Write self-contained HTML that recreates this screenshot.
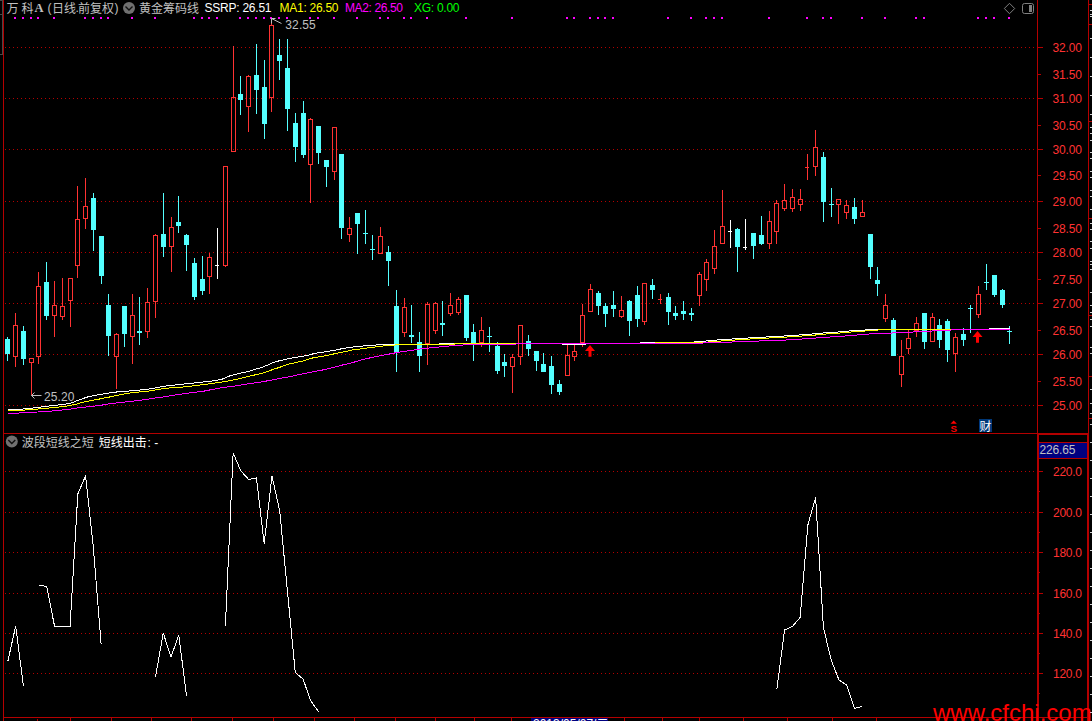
<!DOCTYPE html><html><head><meta charset="utf-8"><title>chart</title><style>html,body{margin:0;padding:0;background:#000;overflow:hidden}svg{display:block}text{font-family:"Liberation Sans","Noto Sans CJK SC",sans-serif;font-size:12px}.cj{font-family:"Liberation Sans","Noto Sans CJK SC",sans-serif}</style></head><body>
<svg width="1092" height="721" viewBox="0 0 1092 721">
<rect width="1092" height="721" fill="#000"/>
<g shape-rendering="crispEdges">
<line x1="5" x2="1036" y1="47.5" y2="47.5" stroke="#b40000" stroke-width="1" stroke-dasharray="1 3"/>
<line x1="5" x2="1036" y1="98.5" y2="98.5" stroke="#b40000" stroke-width="1" stroke-dasharray="1 3"/>
<line x1="5" x2="1036" y1="149.5" y2="149.5" stroke="#b40000" stroke-width="1" stroke-dasharray="1 3"/>
<line x1="5" x2="1036" y1="201.5" y2="201.5" stroke="#b40000" stroke-width="1" stroke-dasharray="1 3"/>
<line x1="5" x2="1036" y1="252.5" y2="252.5" stroke="#b40000" stroke-width="1" stroke-dasharray="1 3"/>
<line x1="5" x2="1036" y1="303.5" y2="303.5" stroke="#b40000" stroke-width="1" stroke-dasharray="1 3"/>
<line x1="5" x2="1036" y1="354.5" y2="354.5" stroke="#b40000" stroke-width="1" stroke-dasharray="1 3"/>
<line x1="5" x2="1036" y1="405.5" y2="405.5" stroke="#b40000" stroke-width="1" stroke-dasharray="1 3"/>
<line x1="5" x2="1036" y1="471.5" y2="471.5" stroke="#b40000" stroke-width="1" stroke-dasharray="1 3"/>
<line x1="5" x2="1036" y1="512.5" y2="512.5" stroke="#b40000" stroke-width="1" stroke-dasharray="1 3"/>
<line x1="5" x2="1036" y1="552.5" y2="552.5" stroke="#b40000" stroke-width="1" stroke-dasharray="1 3"/>
<line x1="5" x2="1036" y1="593.5" y2="593.5" stroke="#b40000" stroke-width="1" stroke-dasharray="1 3"/>
<line x1="5" x2="1036" y1="633.5" y2="633.5" stroke="#b40000" stroke-width="1" stroke-dasharray="1 3"/>
<line x1="5" x2="1036" y1="673.5" y2="673.5" stroke="#b40000" stroke-width="1" stroke-dasharray="1 3"/>
<rect x="3" y="0" width="1" height="721" fill="#b40000"/>
<rect x="2" y="0" width="1" height="55" fill="#484848"/>
<rect x="0" y="14" width="3" height="1" fill="#484848"/>
<rect x="0" y="0" width="3" height="1" fill="#484848"/>
<rect x="0" y="54" width="3" height="1" fill="#484848"/>
<rect x="1037" y="0" width="1" height="433" fill="#b40000"/>
<rect x="1088" y="0" width="1" height="433" fill="#b40000"/>
<rect x="1088" y="4" width="4" height="1" fill="#b40000"/>
<rect x="1088" y="24" width="4" height="1" fill="#b40000"/>
<rect x="1088" y="121" width="4" height="1" fill="#b40000"/>
<rect x="1088" y="218" width="4" height="1" fill="#b40000"/>
<rect x="1088" y="315" width="4" height="1" fill="#b40000"/>
<rect x="1088" y="376" width="4" height="1" fill="#b40000"/>
<rect x="1088" y="418" width="4" height="1" fill="#b40000"/>
<rect x="3" y="433" width="1035" height="1" fill="#b40000"/>
<rect x="1037" y="433" width="2" height="288" fill="#b40000"/>
<rect x="1087" y="433" width="2" height="288" fill="#b40000"/>
<rect x="1037" y="433" width="52" height="2" fill="#b40000"/>
<rect x="1039" y="442" width="48" height="1" fill="#b40000"/>
<rect x="1039" y="458" width="48" height="1" fill="#b40000"/>
<rect x="1039" y="443" width="48" height="15" fill="#000080"/>
<rect x="3" y="717" width="1086" height="1" fill="#b40000"/>
<rect x="70" y="717" width="1" height="4" fill="#b40000"/>
<rect x="111" y="717" width="1" height="4" fill="#b40000"/>
<rect x="151" y="717" width="1" height="4" fill="#b40000"/>
<rect x="191" y="717" width="1" height="4" fill="#b40000"/>
<rect x="232" y="717" width="1" height="4" fill="#b40000"/>
<rect x="273" y="717" width="1" height="4" fill="#b40000"/>
<rect x="314" y="717" width="1" height="4" fill="#b40000"/>
<rect x="354" y="717" width="1" height="4" fill="#b40000"/>
<rect x="395" y="717" width="1" height="4" fill="#b40000"/>
<rect x="435" y="717" width="1" height="4" fill="#b40000"/>
<rect x="474" y="717" width="1" height="4" fill="#b40000"/>
<rect x="511" y="717" width="1" height="4" fill="#b40000"/>
<rect x="624" y="717" width="1" height="4" fill="#b40000"/>
<rect x="662" y="717" width="1" height="4" fill="#b40000"/>
<rect x="699" y="717" width="1" height="4" fill="#b40000"/>
<rect x="743" y="717" width="1" height="4" fill="#b40000"/>
<rect x="787" y="717" width="1" height="4" fill="#b40000"/>
<rect x="832" y="717" width="1" height="4" fill="#b40000"/>
<rect x="876" y="717" width="1" height="4" fill="#b40000"/>
<rect x="37" y="719" width="1" height="2" fill="#b40000"/>
<rect x="1038" y="47" width="5" height="1" fill="#b40000"/>
<rect x="1038" y="74" width="3" height="1" fill="#b40000"/>
<rect x="1038" y="98" width="5" height="1" fill="#b40000"/>
<rect x="1038" y="125" width="3" height="1" fill="#b40000"/>
<rect x="1038" y="149" width="5" height="1" fill="#b40000"/>
<rect x="1038" y="175" width="3" height="1" fill="#b40000"/>
<rect x="1038" y="201" width="5" height="1" fill="#b40000"/>
<rect x="1038" y="228" width="3" height="1" fill="#b40000"/>
<rect x="1038" y="252" width="5" height="1" fill="#b40000"/>
<rect x="1038" y="279" width="3" height="1" fill="#b40000"/>
<rect x="1038" y="303" width="5" height="1" fill="#b40000"/>
<rect x="1038" y="330" width="3" height="1" fill="#b40000"/>
<rect x="1038" y="354" width="5" height="1" fill="#b40000"/>
<rect x="1038" y="381" width="3" height="1" fill="#b40000"/>
<rect x="1038" y="405" width="5" height="1" fill="#b40000"/>
<rect x="1039" y="471" width="4" height="1" fill="#b40000"/>
<rect x="1039" y="491" width="1" height="1" fill="#b40000"/>
<rect x="1039" y="512" width="4" height="1" fill="#b40000"/>
<rect x="1039" y="532" width="1" height="1" fill="#b40000"/>
<rect x="1039" y="552" width="4" height="1" fill="#b40000"/>
<rect x="1039" y="572" width="1" height="1" fill="#b40000"/>
<rect x="1039" y="593" width="4" height="1" fill="#b40000"/>
<rect x="1039" y="613" width="1" height="1" fill="#b40000"/>
<rect x="1039" y="633" width="4" height="1" fill="#b40000"/>
<rect x="1039" y="653" width="1" height="1" fill="#b40000"/>
<rect x="1039" y="673" width="4" height="1" fill="#b40000"/>
<rect x="1039" y="693" width="1" height="1" fill="#b40000"/>
<rect x="1090" y="10" width="2" height="1" fill="#d0d0d0"/>
<rect x="1090" y="14" width="2" height="1" fill="#d0d0d0"/>
<rect x="1090" y="16" width="2" height="1" fill="#d0d0d0"/>
<rect x="1090" y="38" width="2" height="1" fill="#d0d0d0"/>
<rect x="1090" y="57" width="2" height="1" fill="#d0d0d0"/>
<rect x="1090" y="76" width="2" height="1" fill="#d0d0d0"/>
<rect x="1090" y="95" width="2" height="1" fill="#d0d0d0"/>
<rect x="1090" y="114" width="2" height="1" fill="#d0d0d0"/>
<rect x="1090" y="127" width="2" height="1" fill="#d0d0d0"/>
<rect x="1090" y="133" width="2" height="1" fill="#d0d0d0"/>
<rect x="1090" y="140" width="2" height="1" fill="#d0d0d0"/>
<rect x="1090" y="152" width="2" height="1" fill="#d0d0d0"/>
<rect x="1090" y="158" width="2" height="1" fill="#d0d0d0"/>
<rect x="1090" y="171" width="2" height="1" fill="#d0d0d0"/>
<rect x="1090" y="177" width="2" height="1" fill="#d0d0d0"/>
<rect x="1090" y="190" width="2" height="1" fill="#d0d0d0"/>
<rect x="1090" y="196" width="2" height="1" fill="#d0d0d0"/>
<rect x="1090" y="209" width="2" height="1" fill="#d0d0d0"/>
<rect x="1090" y="223" width="2" height="1" fill="#d0d0d0"/>
<rect x="1090" y="229" width="2" height="1" fill="#d0d0d0"/>
<rect x="1090" y="241" width="2" height="1" fill="#d0d0d0"/>
<rect x="1090" y="248" width="2" height="1" fill="#d0d0d0"/>
<rect x="1090" y="261" width="2" height="1" fill="#d0d0d0"/>
<rect x="1090" y="264" width="2" height="1" fill="#d0d0d0"/>
<rect x="1090" y="269" width="2" height="1" fill="#d0d0d0"/>
<rect x="1090" y="292" width="2" height="1" fill="#d0d0d0"/>
<rect x="1090" y="305" width="2" height="1" fill="#d0d0d0"/>
<rect x="1090" y="312" width="2" height="1" fill="#d0d0d0"/>
<rect x="1090" y="319" width="2" height="1" fill="#d0d0d0"/>
<rect x="1090" y="326" width="2" height="1" fill="#d0d0d0"/>
<rect x="1090" y="347" width="2" height="1" fill="#d0d0d0"/>
<rect x="1090" y="353" width="2" height="1" fill="#d0d0d0"/>
<rect x="1090" y="389" width="2" height="1" fill="#d0d0d0"/>
<rect x="1090" y="403" width="2" height="1" fill="#d0d0d0"/>
<rect x="1090" y="413" width="2" height="1" fill="#d0d0d0"/>
<rect x="1090" y="424" width="2" height="1" fill="#d0d0d0"/>
<rect x="1090" y="442" width="2" height="1" fill="#d0d0d0"/>
<rect x="1090" y="460" width="2" height="1" fill="#d0d0d0"/>
<rect x="1090" y="478" width="2" height="1" fill="#d0d0d0"/>
<rect x="1090" y="496" width="2" height="1" fill="#d0d0d0"/>
<rect x="1090" y="514" width="2" height="1" fill="#d0d0d0"/>
<rect x="1090" y="532" width="2" height="1" fill="#d0d0d0"/>
<rect x="1090" y="550" width="2" height="1" fill="#d0d0d0"/>
<rect x="1090" y="568" width="2" height="1" fill="#d0d0d0"/>
<rect x="1090" y="586" width="2" height="1" fill="#d0d0d0"/>
<rect x="1090" y="604" width="2" height="1" fill="#d0d0d0"/>
<rect x="1090" y="622" width="2" height="1" fill="#d0d0d0"/>
<rect x="1090" y="640" width="2" height="1" fill="#d0d0d0"/>
<rect x="1090" y="658" width="2" height="1" fill="#d0d0d0"/>
<rect x="1090" y="676" width="2" height="1" fill="#d0d0d0"/>
<rect x="1090" y="694" width="2" height="1" fill="#d0d0d0"/>
<rect x="1090" y="712" width="2" height="1" fill="#d0d0d0"/>
<rect x="14" y="17" width="2" height="2" fill="#ff00ff"/>
<rect x="22" y="17" width="2" height="2" fill="#ff00ff"/>
<rect x="30" y="17" width="2" height="2" fill="#ff00ff"/>
<rect x="37" y="17" width="2" height="2" fill="#ff00ff"/>
<rect x="53" y="17" width="2" height="2" fill="#ff00ff"/>
<rect x="84" y="17" width="2" height="2" fill="#ff00ff"/>
<rect x="92" y="17" width="2" height="2" fill="#ff00ff"/>
<rect x="100" y="17" width="2" height="2" fill="#ff00ff"/>
<rect x="107" y="17" width="2" height="2" fill="#ff00ff"/>
<rect x="131" y="17" width="2" height="2" fill="#ff00ff"/>
<rect x="154" y="17" width="2" height="2" fill="#ff00ff"/>
<rect x="193" y="17" width="2" height="2" fill="#ff00ff"/>
<rect x="201" y="17" width="2" height="2" fill="#ff00ff"/>
<rect x="208" y="17" width="2" height="2" fill="#ff00ff"/>
<rect x="216" y="17" width="2" height="2" fill="#ff00ff"/>
<rect x="239" y="17" width="2" height="2" fill="#ff00ff"/>
<rect x="247" y="17" width="2" height="2" fill="#ff00ff"/>
<rect x="255" y="17" width="2" height="2" fill="#ff00ff"/>
<rect x="263" y="17" width="2" height="2" fill="#ff00ff"/>
<rect x="270" y="17" width="2" height="2" fill="#ff00ff"/>
<rect x="278" y="17" width="2" height="2" fill="#ff00ff"/>
<rect x="286" y="17" width="2" height="2" fill="#ff00ff"/>
<rect x="309" y="17" width="2" height="2" fill="#ff00ff"/>
<rect x="317" y="17" width="2" height="2" fill="#ff00ff"/>
<rect x="333" y="17" width="2" height="2" fill="#ff00ff"/>
<rect x="356" y="17" width="2" height="2" fill="#ff00ff"/>
<rect x="379" y="17" width="2" height="2" fill="#ff00ff"/>
<rect x="387" y="17" width="2" height="2" fill="#ff00ff"/>
<rect x="403" y="17" width="2" height="2" fill="#ff00ff"/>
<rect x="410" y="17" width="2" height="2" fill="#ff00ff"/>
<rect x="426" y="17" width="2" height="2" fill="#ff00ff"/>
<rect x="465" y="17" width="2" height="2" fill="#ff00ff"/>
<rect x="511" y="17" width="2" height="2" fill="#ff00ff"/>
<rect x="566" y="17" width="2" height="2" fill="#ff00ff"/>
<rect x="573" y="17" width="2" height="2" fill="#ff00ff"/>
<rect x="589" y="17" width="2" height="2" fill="#ff00ff"/>
<rect x="597" y="17" width="2" height="2" fill="#ff00ff"/>
<rect x="604" y="17" width="2" height="2" fill="#ff00ff"/>
<rect x="612" y="17" width="2" height="2" fill="#ff00ff"/>
<rect x="667" y="17" width="2" height="2" fill="#ff00ff"/>
<rect x="690" y="17" width="2" height="2" fill="#ff00ff"/>
<rect x="705" y="17" width="2" height="2" fill="#ff00ff"/>
<rect x="713" y="17" width="2" height="2" fill="#ff00ff"/>
<rect x="721" y="17" width="2" height="2" fill="#ff00ff"/>
<rect x="768" y="17" width="2" height="2" fill="#ff00ff"/>
<rect x="806" y="17" width="2" height="2" fill="#ff00ff"/>
<rect x="822" y="17" width="2" height="2" fill="#ff00ff"/>
<rect x="830" y="17" width="2" height="2" fill="#ff00ff"/>
<rect x="861" y="17" width="2" height="2" fill="#ff00ff"/>
<rect x="884" y="17" width="2" height="2" fill="#ff00ff"/>
<rect x="915" y="17" width="2" height="2" fill="#ff00ff"/>
<rect x="923" y="17" width="2" height="2" fill="#ff00ff"/>
<rect x="977" y="17" width="2" height="2" fill="#ff00ff"/>
<rect x="985" y="17" width="2" height="2" fill="#ff00ff"/>
<rect x="993" y="17" width="2" height="2" fill="#ff00ff"/>
<rect x="1008" y="17" width="2" height="2" fill="#ff00ff"/>
<rect x="531" y="718" width="77" height="3" fill="#000080"/>
</g>
<g shape-rendering="crispEdges">
<rect x="7" y="337" width="1" height="24" fill="#54ffff"/>
<rect x="5" y="339" width="5" height="15" fill="#54ffff"/>
<rect x="15" y="313" width="1" height="12" fill="#ff3232"/>
<rect x="15" y="357" width="1" height="10" fill="#ff3232"/>
<path d="M13,325h5v32h-5z M14,326v30h3v-30z" fill="#ff3232" fill-rule="evenodd"/>
<rect x="23" y="326" width="1" height="39" fill="#54ffff"/>
<rect x="21" y="331" width="5" height="28" fill="#54ffff"/>
<rect x="31" y="363" width="1" height="32" fill="#ff3232"/>
<path d="M29,358h5v5h-5z M30,359v3h3v-3z" fill="#ff3232" fill-rule="evenodd"/>
<rect x="38" y="272" width="1" height="14" fill="#ff3232"/>
<rect x="38" y="357" width="1" height="7" fill="#ff3232"/>
<path d="M36,286h5v71h-5z M37,287v69h3v-69z" fill="#ff3232" fill-rule="evenodd"/>
<rect x="46" y="262" width="1" height="58" fill="#54ffff"/>
<rect x="44" y="282" width="5" height="34" fill="#54ffff"/>
<rect x="54" y="281" width="1" height="24" fill="#ff3232"/>
<rect x="54" y="316" width="1" height="21" fill="#ff3232"/>
<path d="M52,305h5v11h-5z M53,306v9h3v-9z" fill="#ff3232" fill-rule="evenodd"/>
<rect x="62" y="278" width="1" height="28" fill="#ff3232"/>
<rect x="62" y="317" width="1" height="3" fill="#ff3232"/>
<path d="M60,306h5v11h-5z M61,307v9h3v-9z" fill="#ff3232" fill-rule="evenodd"/>
<rect x="70" y="301" width="1" height="26" fill="#ff3232"/>
<path d="M68,278h5v23h-5z M69,279v21h3v-21z" fill="#ff3232" fill-rule="evenodd"/>
<rect x="77" y="186" width="1" height="33" fill="#ff3232"/>
<rect x="77" y="266" width="1" height="12" fill="#ff3232"/>
<path d="M75,219h5v47h-5z M76,220v45h3v-45z" fill="#ff3232" fill-rule="evenodd"/>
<rect x="85" y="178" width="1" height="28" fill="#ff3232"/>
<rect x="85" y="219" width="1" height="10" fill="#ff3232"/>
<path d="M83,206h5v13h-5z M84,207v11h3v-11z" fill="#ff3232" fill-rule="evenodd"/>
<rect x="93" y="193" width="1" height="58" fill="#54ffff"/>
<rect x="91" y="198" width="5" height="32" fill="#54ffff"/>
<rect x="101" y="236" width="1" height="48" fill="#54ffff"/>
<rect x="99" y="236" width="5" height="40" fill="#54ffff"/>
<rect x="108" y="294" width="1" height="62" fill="#54ffff"/>
<rect x="106" y="305" width="5" height="31" fill="#54ffff"/>
<rect x="116" y="333" width="1" height="1" fill="#ff3232"/>
<rect x="116" y="357" width="1" height="32" fill="#ff3232"/>
<path d="M114,334h5v23h-5z M115,335v21h3v-21z" fill="#ff3232" fill-rule="evenodd"/>
<rect x="124" y="306" width="1" height="41" fill="#54ffff"/>
<rect x="122" y="306" width="5" height="28" fill="#54ffff"/>
<rect x="132" y="294" width="1" height="21" fill="#ff3232"/>
<rect x="132" y="337" width="1" height="27" fill="#ff3232"/>
<path d="M130,315h5v22h-5z M131,316v20h3v-20z" fill="#ff3232" fill-rule="evenodd"/>
<rect x="139" y="297" width="1" height="48" fill="#54ffff"/>
<rect x="137" y="331" width="5" height="2" fill="#54ffff"/>
<rect x="147" y="288" width="1" height="14" fill="#ff3232"/>
<rect x="147" y="332" width="1" height="6" fill="#ff3232"/>
<path d="M145,302h5v30h-5z M146,303v28h3v-28z" fill="#ff3232" fill-rule="evenodd"/>
<rect x="155" y="234" width="1" height="1" fill="#ff3232"/>
<rect x="155" y="302" width="1" height="16" fill="#ff3232"/>
<path d="M153,235h5v67h-5z M154,236v65h3v-65z" fill="#ff3232" fill-rule="evenodd"/>
<rect x="163" y="193" width="1" height="64" fill="#54ffff"/>
<rect x="161" y="234" width="5" height="13" fill="#54ffff"/>
<rect x="171" y="217" width="1" height="10" fill="#ff3232"/>
<rect x="171" y="247" width="1" height="25" fill="#ff3232"/>
<path d="M169,227h5v20h-5z M170,228v18h3v-18z" fill="#ff3232" fill-rule="evenodd"/>
<rect x="178" y="196" width="1" height="37" fill="#54ffff"/>
<rect x="176" y="222" width="5" height="4" fill="#54ffff"/>
<rect x="186" y="234" width="1" height="37" fill="#54ffff"/>
<rect x="184" y="235" width="5" height="10" fill="#54ffff"/>
<rect x="194" y="258" width="1" height="42" fill="#54ffff"/>
<rect x="192" y="263" width="5" height="34" fill="#54ffff"/>
<rect x="202" y="256" width="1" height="39" fill="#54ffff"/>
<rect x="200" y="279" width="5" height="12" fill="#54ffff"/>
<rect x="209" y="253" width="1" height="4" fill="#ff3232"/>
<rect x="209" y="277" width="1" height="17" fill="#ff3232"/>
<path d="M207,257h5v20h-5z M208,258v18h3v-18z" fill="#ff3232" fill-rule="evenodd"/>
<rect x="217" y="228" width="1" height="51" fill="#ffffff"/>
<rect x="215" y="265" width="4" height="1" fill="#ffffff"/>
<rect x="225" y="266" width="1" height="1" fill="#ff3232"/>
<path d="M223,166h5v100h-5z M224,167v98h3v-98z" fill="#ff3232" fill-rule="evenodd"/>
<rect x="233" y="46" width="1" height="51" fill="#ff3232"/>
<path d="M231,97h5v55h-5z M232,98v53h3v-53z" fill="#ff3232" fill-rule="evenodd"/>
<rect x="240" y="76" width="1" height="39" fill="#54ffff"/>
<rect x="238" y="94" width="5" height="6" fill="#54ffff"/>
<rect x="248" y="75" width="1" height="1" fill="#ff3232"/>
<rect x="248" y="107" width="1" height="25" fill="#ff3232"/>
<path d="M246,76h5v31h-5z M247,77v29h3v-29z" fill="#ff3232" fill-rule="evenodd"/>
<rect x="256" y="44" width="1" height="70" fill="#54ffff"/>
<rect x="254" y="75" width="5" height="15" fill="#54ffff"/>
<rect x="264" y="60" width="1" height="79" fill="#54ffff"/>
<rect x="262" y="87" width="5" height="37" fill="#54ffff"/>
<rect x="271" y="19" width="1" height="6" fill="#ff3232"/>
<rect x="271" y="98" width="1" height="14" fill="#ff3232"/>
<path d="M269,25h5v73h-5z M270,26v71h3v-71z" fill="#ff3232" fill-rule="evenodd"/>
<rect x="279" y="39" width="1" height="41" fill="#54ffff"/>
<rect x="277" y="55" width="5" height="6" fill="#54ffff"/>
<rect x="287" y="39" width="1" height="92" fill="#54ffff"/>
<rect x="285" y="68" width="5" height="41" fill="#54ffff"/>
<rect x="295" y="113" width="1" height="49" fill="#54ffff"/>
<rect x="293" y="123" width="5" height="24" fill="#54ffff"/>
<rect x="303" y="101" width="1" height="57" fill="#54ffff"/>
<rect x="301" y="113" width="5" height="42" fill="#54ffff"/>
<rect x="310" y="118" width="1" height="1" fill="#ff3232"/>
<rect x="310" y="165" width="1" height="38" fill="#ff3232"/>
<path d="M308,119h5v46h-5z M309,120v44h3v-44z" fill="#ff3232" fill-rule="evenodd"/>
<rect x="318" y="126" width="1" height="38" fill="#54ffff"/>
<rect x="316" y="126" width="5" height="27" fill="#54ffff"/>
<rect x="326" y="160" width="1" height="27" fill="#54ffff"/>
<rect x="324" y="160" width="5" height="7" fill="#54ffff"/>
<rect x="334" y="172" width="1" height="8" fill="#ff3232"/>
<path d="M332,127h5v45h-5z M333,128v43h3v-43z" fill="#ff3232" fill-rule="evenodd"/>
<rect x="341" y="154" width="1" height="85" fill="#54ffff"/>
<rect x="339" y="154" width="5" height="74" fill="#54ffff"/>
<rect x="349" y="217" width="1" height="11" fill="#ff3232"/>
<rect x="349" y="235" width="1" height="7" fill="#ff3232"/>
<path d="M347,228h5v7h-5z M348,229v5h3v-5z" fill="#ff3232" fill-rule="evenodd"/>
<rect x="357" y="213" width="1" height="41" fill="#54ffff"/>
<rect x="355" y="213" width="5" height="11" fill="#54ffff"/>
<rect x="365" y="210" width="1" height="34" fill="#54ffff"/>
<rect x="363" y="233" width="5" height="1" fill="#54ffff"/>
<rect x="372" y="235" width="1" height="25" fill="#54ffff"/>
<rect x="370" y="249" width="5" height="1" fill="#54ffff"/>
<rect x="380" y="227" width="1" height="9" fill="#ff3232"/>
<path d="M378,236h5v18h-5z M379,237v16h3v-16z" fill="#ff3232" fill-rule="evenodd"/>
<rect x="388" y="246" width="1" height="40" fill="#54ffff"/>
<rect x="386" y="252" width="5" height="9" fill="#54ffff"/>
<rect x="396" y="290" width="1" height="82" fill="#54ffff"/>
<rect x="394" y="306" width="5" height="46" fill="#54ffff"/>
<rect x="404" y="298" width="1" height="9" fill="#ff3232"/>
<rect x="404" y="333" width="1" height="4" fill="#ff3232"/>
<path d="M402,307h5v26h-5z M403,308v24h3v-24z" fill="#ff3232" fill-rule="evenodd"/>
<rect x="411" y="305" width="1" height="38" fill="#54ffff"/>
<rect x="409" y="335" width="5" height="2" fill="#54ffff"/>
<rect x="419" y="332" width="1" height="40" fill="#54ffff"/>
<rect x="417" y="342" width="5" height="14" fill="#54ffff"/>
<rect x="427" y="302" width="1" height="2" fill="#ff3232"/>
<rect x="427" y="344" width="1" height="21" fill="#ff3232"/>
<path d="M425,304h5v40h-5z M426,305v38h3v-38z" fill="#ff3232" fill-rule="evenodd"/>
<rect x="435" y="302" width="1" height="1" fill="#ff3232"/>
<rect x="435" y="331" width="1" height="3" fill="#ff3232"/>
<path d="M433,303h5v28h-5z M434,304v26h3v-26z" fill="#ff3232" fill-rule="evenodd"/>
<rect x="442" y="301" width="1" height="35" fill="#54ffff"/>
<rect x="440" y="323" width="5" height="2" fill="#54ffff"/>
<rect x="450" y="293" width="1" height="12" fill="#ff3232"/>
<rect x="450" y="314" width="1" height="2" fill="#ff3232"/>
<path d="M448,305h5v9h-5z M449,306v7h3v-7z" fill="#ff3232" fill-rule="evenodd"/>
<rect x="458" y="297" width="1" height="2" fill="#ff3232"/>
<rect x="458" y="313" width="1" height="2" fill="#ff3232"/>
<path d="M456,299h5v14h-5z M457,300v12h3v-12z" fill="#ff3232" fill-rule="evenodd"/>
<rect x="466" y="295" width="1" height="46" fill="#54ffff"/>
<rect x="464" y="295" width="5" height="43" fill="#54ffff"/>
<rect x="473" y="324" width="1" height="37" fill="#54ffff"/>
<rect x="471" y="332" width="5" height="12" fill="#54ffff"/>
<rect x="481" y="317" width="1" height="13" fill="#ff3232"/>
<rect x="481" y="343" width="1" height="4" fill="#ff3232"/>
<path d="M479,330h5v13h-5z M480,331v11h3v-11z" fill="#ff3232" fill-rule="evenodd"/>
<rect x="489" y="327" width="1" height="25" fill="#54ffff"/>
<rect x="487" y="336" width="5" height="1" fill="#54ffff"/>
<rect x="497" y="342" width="1" height="32" fill="#54ffff"/>
<rect x="495" y="346" width="5" height="25" fill="#54ffff"/>
<rect x="504" y="354" width="1" height="23" fill="#54ffff"/>
<rect x="502" y="362" width="5" height="4" fill="#54ffff"/>
<rect x="512" y="354" width="1" height="3" fill="#ff3232"/>
<rect x="512" y="367" width="1" height="26" fill="#ff3232"/>
<path d="M510,357h5v10h-5z M511,358v8h3v-8z" fill="#ff3232" fill-rule="evenodd"/>
<rect x="520" y="357" width="1" height="8" fill="#ff3232"/>
<path d="M518,325h5v32h-5z M519,326v30h3v-30z" fill="#ff3232" fill-rule="evenodd"/>
<rect x="528" y="335" width="1" height="21" fill="#54ffff"/>
<rect x="526" y="341" width="5" height="8" fill="#54ffff"/>
<rect x="536" y="351" width="1" height="20" fill="#54ffff"/>
<rect x="534" y="351" width="5" height="10" fill="#54ffff"/>
<rect x="543" y="353" width="1" height="19" fill="#54ffff"/>
<rect x="541" y="364" width="5" height="8" fill="#54ffff"/>
<rect x="551" y="356" width="1" height="38" fill="#54ffff"/>
<rect x="549" y="366" width="5" height="19" fill="#54ffff"/>
<rect x="559" y="380" width="1" height="15" fill="#54ffff"/>
<rect x="557" y="384" width="5" height="8" fill="#54ffff"/>
<rect x="567" y="345" width="1" height="10" fill="#ff3232"/>
<path d="M565,355h5v21h-5z M566,356v19h3v-19z" fill="#ff3232" fill-rule="evenodd"/>
<rect x="574" y="345" width="1" height="6" fill="#ff3232"/>
<rect x="574" y="357" width="1" height="4" fill="#ff3232"/>
<path d="M572,351h5v6h-5z M573,352v4h3v-4z" fill="#ff3232" fill-rule="evenodd"/>
<rect x="582" y="304" width="1" height="11" fill="#ff3232"/>
<rect x="582" y="343" width="1" height="4" fill="#ff3232"/>
<path d="M580,315h5v28h-5z M581,316v26h3v-26z" fill="#ff3232" fill-rule="evenodd"/>
<rect x="590" y="284" width="1" height="5" fill="#ff3232"/>
<path d="M588,289h5v23h-5z M589,290v21h3v-21z" fill="#ff3232" fill-rule="evenodd"/>
<rect x="598" y="291" width="1" height="24" fill="#54ffff"/>
<rect x="596" y="293" width="5" height="13" fill="#54ffff"/>
<rect x="605" y="303" width="1" height="24" fill="#54ffff"/>
<rect x="603" y="306" width="5" height="8" fill="#54ffff"/>
<rect x="613" y="291" width="1" height="26" fill="#54ffff"/>
<rect x="611" y="305" width="5" height="4" fill="#54ffff"/>
<rect x="621" y="296" width="1" height="14" fill="#ff3232"/>
<rect x="621" y="317" width="1" height="1" fill="#ff3232"/>
<path d="M619,310h5v7h-5z M620,311v5h3v-5z" fill="#ff3232" fill-rule="evenodd"/>
<rect x="629" y="300" width="1" height="36" fill="#54ffff"/>
<rect x="627" y="301" width="5" height="20" fill="#54ffff"/>
<rect x="637" y="286" width="1" height="41" fill="#54ffff"/>
<rect x="635" y="295" width="5" height="24" fill="#54ffff"/>
<rect x="644" y="322" width="1" height="3" fill="#ff3232"/>
<path d="M642,283h5v39h-5z M643,284v37h3v-37z" fill="#ff3232" fill-rule="evenodd"/>
<rect x="652" y="279" width="1" height="20" fill="#54ffff"/>
<rect x="650" y="285" width="5" height="5" fill="#54ffff"/>
<rect x="660" y="294" width="1" height="10" fill="#ff3232"/>
<rect x="658" y="299" width="4" height="1" fill="#ff3232"/>
<rect x="668" y="293" width="1" height="32" fill="#54ffff"/>
<rect x="666" y="297" width="5" height="15" fill="#54ffff"/>
<rect x="675" y="306" width="1" height="14" fill="#54ffff"/>
<rect x="673" y="313" width="5" height="3" fill="#54ffff"/>
<rect x="683" y="301" width="1" height="19" fill="#54ffff"/>
<rect x="681" y="311" width="5" height="3" fill="#54ffff"/>
<rect x="691" y="308" width="1" height="13" fill="#54ffff"/>
<rect x="689" y="313" width="5" height="2" fill="#54ffff"/>
<rect x="699" y="272" width="1" height="2" fill="#ff3232"/>
<rect x="699" y="296" width="1" height="10" fill="#ff3232"/>
<path d="M697,274h5v22h-5z M698,275v20h3v-20z" fill="#ff3232" fill-rule="evenodd"/>
<rect x="706" y="259" width="1" height="3" fill="#ff3232"/>
<rect x="706" y="280" width="1" height="11" fill="#ff3232"/>
<path d="M704,262h5v18h-5z M705,263v16h3v-16z" fill="#ff3232" fill-rule="evenodd"/>
<rect x="714" y="230" width="1" height="16" fill="#ff3232"/>
<rect x="714" y="269" width="1" height="5" fill="#ff3232"/>
<path d="M712,246h5v23h-5z M713,247v21h3v-21z" fill="#ff3232" fill-rule="evenodd"/>
<rect x="722" y="190" width="1" height="36" fill="#ff3232"/>
<path d="M720,226h5v18h-5z M721,227v16h3v-16z" fill="#ff3232" fill-rule="evenodd"/>
<rect x="730" y="220" width="1" height="28" fill="#ffffff"/>
<rect x="728" y="231" width="4" height="1" fill="#ffffff"/>
<rect x="737" y="228" width="1" height="44" fill="#54ffff"/>
<rect x="735" y="229" width="5" height="18" fill="#54ffff"/>
<rect x="745" y="219" width="1" height="31" fill="#ffffff"/>
<rect x="743" y="247" width="4" height="1" fill="#ffffff"/>
<rect x="753" y="233" width="1" height="26" fill="#54ffff"/>
<rect x="751" y="233" width="5" height="13" fill="#54ffff"/>
<rect x="761" y="216" width="1" height="29" fill="#54ffff"/>
<rect x="759" y="235" width="5" height="9" fill="#54ffff"/>
<rect x="769" y="211" width="1" height="10" fill="#ff3232"/>
<rect x="769" y="244" width="1" height="5" fill="#ff3232"/>
<path d="M767,221h5v23h-5z M768,222v21h3v-21z" fill="#ff3232" fill-rule="evenodd"/>
<rect x="776" y="200" width="1" height="3" fill="#ff3232"/>
<rect x="776" y="232" width="1" height="12" fill="#ff3232"/>
<path d="M774,203h5v29h-5z M775,204v27h3v-27z" fill="#ff3232" fill-rule="evenodd"/>
<rect x="784" y="184" width="1" height="16" fill="#ff3232"/>
<rect x="784" y="209" width="1" height="2" fill="#ff3232"/>
<path d="M782,200h5v9h-5z M783,201v7h3v-7z" fill="#ff3232" fill-rule="evenodd"/>
<rect x="792" y="189" width="1" height="8" fill="#ff3232"/>
<rect x="792" y="209" width="1" height="3" fill="#ff3232"/>
<path d="M790,197h5v12h-5z M791,198v10h3v-10z" fill="#ff3232" fill-rule="evenodd"/>
<rect x="800" y="189" width="1" height="10" fill="#ff3232"/>
<rect x="800" y="205" width="1" height="6" fill="#ff3232"/>
<path d="M798,199h5v6h-5z M799,200v4h3v-4z" fill="#ff3232" fill-rule="evenodd"/>
<rect x="807" y="154" width="1" height="26" fill="#ff3232"/>
<rect x="805" y="167" width="4" height="1" fill="#ff3232"/>
<rect x="815" y="130" width="1" height="17" fill="#ff3232"/>
<rect x="815" y="167" width="1" height="9" fill="#ff3232"/>
<path d="M813,147h5v20h-5z M814,148v18h3v-18z" fill="#ff3232" fill-rule="evenodd"/>
<rect x="823" y="152" width="1" height="70" fill="#54ffff"/>
<rect x="821" y="157" width="5" height="45" fill="#54ffff"/>
<rect x="831" y="188" width="1" height="29" fill="#54ffff"/>
<rect x="829" y="204" width="5" height="1" fill="#54ffff"/>
<rect x="838" y="205" width="1" height="19" fill="#ff3232"/>
<path d="M836,199h5v6h-5z M837,200v4h3v-4z" fill="#ff3232" fill-rule="evenodd"/>
<rect x="846" y="200" width="1" height="5" fill="#ff3232"/>
<rect x="846" y="213" width="1" height="6" fill="#ff3232"/>
<path d="M844,205h5v8h-5z M845,206v6h3v-6z" fill="#ff3232" fill-rule="evenodd"/>
<rect x="854" y="198" width="1" height="26" fill="#54ffff"/>
<rect x="852" y="207" width="5" height="12" fill="#54ffff"/>
<rect x="862" y="200" width="1" height="12" fill="#ff3232"/>
<path d="M860,212h5v5h-5z M861,213v3h3v-3z" fill="#ff3232" fill-rule="evenodd"/>
<rect x="870" y="234" width="1" height="45" fill="#54ffff"/>
<rect x="868" y="234" width="5" height="33" fill="#54ffff"/>
<rect x="877" y="267" width="1" height="29" fill="#54ffff"/>
<rect x="875" y="280" width="5" height="4" fill="#54ffff"/>
<rect x="885" y="294" width="1" height="11" fill="#ff3232"/>
<rect x="885" y="319" width="1" height="3" fill="#ff3232"/>
<path d="M883,305h5v14h-5z M884,306v12h3v-12z" fill="#ff3232" fill-rule="evenodd"/>
<rect x="893" y="318" width="1" height="38" fill="#54ffff"/>
<rect x="891" y="320" width="5" height="36" fill="#54ffff"/>
<rect x="901" y="340" width="1" height="16" fill="#ff3232"/>
<rect x="901" y="375" width="1" height="12" fill="#ff3232"/>
<path d="M899,356h5v19h-5z M900,357v17h3v-17z" fill="#ff3232" fill-rule="evenodd"/>
<rect x="908" y="330" width="1" height="8" fill="#ff3232"/>
<rect x="908" y="349" width="1" height="5" fill="#ff3232"/>
<path d="M906,338h5v11h-5z M907,339v9h3v-9z" fill="#ff3232" fill-rule="evenodd"/>
<rect x="916" y="317" width="1" height="6" fill="#ff3232"/>
<rect x="916" y="331" width="1" height="6" fill="#ff3232"/>
<path d="M914,323h5v8h-5z M915,324v6h3v-6z" fill="#ff3232" fill-rule="evenodd"/>
<rect x="924" y="313" width="1" height="36" fill="#54ffff"/>
<rect x="922" y="313" width="5" height="29" fill="#54ffff"/>
<rect x="932" y="313" width="1" height="4" fill="#ff3232"/>
<path d="M930,317h5v25h-5z M931,318v23h3v-23z" fill="#ff3232" fill-rule="evenodd"/>
<rect x="939" y="319" width="1" height="29" fill="#54ffff"/>
<rect x="937" y="325" width="5" height="15" fill="#54ffff"/>
<rect x="947" y="319" width="1" height="43" fill="#54ffff"/>
<rect x="945" y="321" width="5" height="29" fill="#54ffff"/>
<rect x="955" y="333" width="1" height="4" fill="#ff3232"/>
<rect x="955" y="354" width="1" height="18" fill="#ff3232"/>
<path d="M953,337h5v17h-5z M954,338v15h3v-15z" fill="#ff3232" fill-rule="evenodd"/>
<rect x="963" y="328" width="1" height="18" fill="#54ffff"/>
<rect x="961" y="334" width="5" height="6" fill="#54ffff"/>
<rect x="970" y="305" width="1" height="28" fill="#54ffff"/>
<rect x="968" y="308" width="5" height="1" fill="#54ffff"/>
<rect x="978" y="286" width="1" height="8" fill="#ff3232"/>
<rect x="978" y="315" width="1" height="3" fill="#ff3232"/>
<path d="M976,294h5v21h-5z M977,295v19h3v-19z" fill="#ff3232" fill-rule="evenodd"/>
<rect x="986" y="264" width="1" height="26" fill="#54ffff"/>
<rect x="984" y="282" width="5" height="1" fill="#54ffff"/>
<rect x="994" y="275" width="1" height="22" fill="#54ffff"/>
<rect x="992" y="275" width="5" height="20" fill="#54ffff"/>
<rect x="1002" y="289" width="1" height="19" fill="#54ffff"/>
<rect x="1000" y="290" width="5" height="15" fill="#54ffff"/>
<rect x="1009" y="326" width="1" height="18" fill="#54ffff"/>
<rect x="1007" y="331" width="5" height="1" fill="#54ffff"/>
<path d="M590,345l5,6h-3.5v5.7h-3v-5.7h-3.5z" fill="#ff0000" shape-rendering="auto"/>
<path d="M977.5,331l5,6h-3.5v5.7h-3v-5.7h-3.5z" fill="#ff0000" shape-rendering="auto"/>
</g>
<polyline points="7.50,409.50 18.00,409.50 26.00,408.70 37.50,407.50 46.00,406.30 54.00,405.50 62.50,404.50 70.00,403.30 77.00,400.80 82.50,398.70 87.50,397.00 95.00,395.30 104.00,393.80 114.00,392.20 126.00,391.30 137.50,390.30 147.50,389.20 156.00,387.80 164.00,386.30 172.00,385.30 179.00,384.50 187.00,383.70 198.50,382.50 209.50,381.30 216.00,380.50 222.00,379.20 226.00,377.50 230.00,375.80 235.00,374.50 240.00,373.30 246.00,372.00 252.00,370.50 257.00,368.70 262.00,367.50 267.00,365.30 272.00,363.00 277.00,361.30 282.00,360.30 288.00,358.80 295.00,357.50 302.50,356.30 308.50,355.30 313.50,353.70 319.50,352.50 326.00,351.70 333.00,350.50 338.50,349.50 343.50,348.30 349.50,347.50 355.50,346.70 360.00,346.20 373.00,345.30 380.00,344.70 395.00,344.60 400.00,344.60 439.00,344.60 440.00,343.40 453.50,343.40 455.00,343.60 517.00,343.60 560.00,343.50 564.00,344.50 585.50,344.50 587.00,343.50 640.00,343.50 641.00,342.50 694.00,342.50 695.00,341.50 703.00,341.50 709.00,340.50 725.00,339.50 737.00,338.70 756.00,337.50 775.00,336.60 791.00,335.50 807.00,334.50 823.00,333.00 838.00,332.00 850.00,330.90 865.00,330.00 879.00,329.50 951.00,329.50 989.00,329.50 990.00,328.50 1009.50,328.50" fill="none" stroke="#ffffff" stroke-width="1" shape-rendering="crispEdges"/>
<polyline points="7.50,410.80 12.00,410.80 25.00,410.00 41.50,408.70 54.00,407.50 62.50,406.70 70.00,405.50 76.00,404.20 81.50,402.50 88.00,401.20 96.00,399.70 103.00,398.30 111.00,396.70 117.50,395.30 123.00,394.20 131.00,392.80 139.00,392.00 147.50,391.20 155.00,390.00 162.50,388.80 171.00,387.80 180.00,387.30 191.00,386.20 202.00,384.70 209.50,383.80 217.00,382.80 224.50,381.70 231.00,380.50 237.00,379.20 242.00,378.00 247.50,376.70 254.50,375.00 260.00,373.80 265.00,372.50 270.00,370.50 275.00,368.80 280.00,367.20 285.00,365.30 290.00,363.80 296.00,362.50 302.00,361.20 307.00,359.70 312.50,358.00 319.50,356.70 325.00,355.80 331.00,354.50 337.00,353.30 342.00,352.20 347.00,351.20 352.00,350.00 356.50,349.60 364.50,348.30 372.00,347.50 379.50,346.30 392.00,345.30 400.00,344.60 453.50,344.60 455.00,343.60 517.00,343.60 640.00,343.50 655.00,343.40 656.00,342.50 703.00,342.50 715.00,341.40 730.00,340.40 741.50,339.50 760.50,338.40 779.50,337.50 795.50,336.40 811.50,335.40 827.00,333.90 842.50,332.80 854.00,331.70 869.50,330.70 883.00,329.60 951.00,329.50" fill="none" stroke="#ffff00" stroke-width="1" shape-rendering="crispEdges"/>
<polyline points="7.50,413.30 13.00,413.30 30.00,412.50 50.00,411.20 62.50,410.00 70.00,409.20 77.50,408.00 86.00,407.00 93.00,406.20 101.00,405.30 109.00,403.80 117.50,402.80 125.00,402.00 132.50,401.20 140.00,400.30 147.50,399.20 155.00,398.00 161.50,397.20 168.00,396.20 174.00,395.20 179.00,394.50 187.00,393.30 195.00,392.20 203.50,391.20 211.00,389.70 218.50,388.30 226.00,387.20 233.50,386.20 241.00,385.00 248.50,383.80 256.00,382.80 262.50,381.70 269.50,380.50 276.00,379.20 283.00,377.80 289.50,376.70 296.00,375.30 302.50,373.80 309.50,372.50 316.00,371.20 322.50,370.00 329.50,368.30 336.00,366.70 342.50,365.00 349.50,363.30 354.50,362.00 359.50,360.50 364.50,359.20 369.50,358.00 375.50,356.70 382.00,355.30 388.50,354.20 395.50,352.80 402.00,351.70 408.50,350.80 415.50,349.70 422.00,348.80 429.50,348.00 437.00,347.20 444.50,346.30 455.50,345.50 469.50,344.60 476.00,344.50 515.50,344.50 516.50,343.50 702.00,343.50 704.00,342.50 719.00,342.50 749.50,341.30 776.50,340.50 796.00,339.50 811.50,338.30 827.50,337.20 843.00,336.20 854.00,335.30 866.00,334.20 880.00,333.30 889.00,333.30 900.00,332.30 911.00,332.20 920.00,331.30 928.00,331.30 940.00,330.40 950.00,330.30 952.00,329.50 1009.50,329.50" fill="none" stroke="#ff00ff" stroke-width="1" shape-rendering="crispEdges"/>
<polyline points="7.90,661.00 15.67,626.00 23.43,686.00" fill="none" stroke="#ffffff" stroke-width="1" shape-rendering="crispEdges"/>
<polyline points="38.97,585.00 46.73,586.50 54.50,626.00 62.27,626.00 70.03,627.00 77.80,494.00 85.57,476.00 93.33,547.00 101.10,644.00" fill="none" stroke="#ffffff" stroke-width="1" shape-rendering="crispEdges"/>
<polyline points="155.47,677.00 163.24,633.00 171.00,657.00 178.77,635.00 186.54,696.00" fill="none" stroke="#ffffff" stroke-width="1" shape-rendering="crispEdges"/>
<polyline points="225.37,626.50 233.14,453.00 240.90,471.00 248.67,479.50 256.44,478.00 264.20,543.50 271.97,476.00 279.74,511.00 295.27,672.50 303.04,679.00 310.81,701.00 318.57,711.50" fill="none" stroke="#ffffff" stroke-width="1" shape-rendering="crispEdges"/>
<polyline points="776.81,689.50 784.58,630.00 792.35,626.50 800.11,617.50 807.88,525.00 815.65,497.50 823.41,627.50 831.18,660.00 838.95,680.00 846.71,685.00 854.48,708.50 862.25,706.50" fill="none" stroke="#ffffff" stroke-width="1" shape-rendering="crispEdges"/>
<circle cx="129" cy="7.9" r="6" fill="#707070"/><path d="M125.5,6.4l3.5,3.5l3.5,-3.5" fill="none" stroke="#101010" stroke-width="1.4"/>
<circle cx="11.8" cy="441.4" r="6" fill="#707070"/><path d="M8.3,439.9l3.5,3.5l3.5,-3.5" fill="none" stroke="#101010" stroke-width="1.4"/>
<path d="M1009.5,3.3l5.2,5.2l-5.2,5.2l-5.2,-5.2z" fill="none" stroke="#808080" stroke-width="1"/>
<rect x="1022.5" y="3.5" width="11" height="10" rx="2" fill="none" stroke="#808080" stroke-width="1"/><rect x="1029" y="5" width="3" height="7" fill="#808080"/>
<text x="6.5" y="13" fill="#c0c0c0" class="cj">万</text>
<text x="21.5" y="13" fill="#c0c0c0" class="cj">科</text>
<text x="34.6" y="12" fill="#c0c0c0" style="font-family:'Liberation Serif',serif;font-size:12.5px;font-weight:bold">A</text>
<text x="47.5" y="11.8" fill="#c0c0c0" >(</text>
<text x="52" y="13" fill="#c0c0c0" class="cj">日线</text>
<text x="75.5" y="12" fill="#c0c0c0" >.</text>
<text x="78" y="13" fill="#c0c0c0" class="cj">前复权</text>
<text x="114.5" y="11.8" fill="#c0c0c0" >)</text>
<text x="139" y="13" fill="#c0c0c0" class="cj">黄金筹码线</text>
<text x="204.5" y="11.6" fill="#ffffff" textLength="67">SSRP: 26.51</text>
<text x="279.5" y="11.6" fill="#ffff00" textLength="59">MA1: 26.50</text>
<text x="345" y="11.6" fill="#ff00ff" textLength="58">MA2: 26.50</text>
<text x="414" y="11.6" fill="#00ff00" textLength="45.5">XG: 0.00</text>
<text x="285.3" y="29" fill="#c0c0c0" textLength="30.5">32.55</text>
<text x="44" y="401" fill="#c0c0c0" textLength="30.5">25.20</text>
<path d="M31.5,395.5h10M31.5,395.5l3,-3M31.5,395.5l3,3" stroke="#c0c0c0" stroke-width="1" fill="none"/>
<path d="M271.5,18.5l10,5M271.5,18.5v5M271.5,18.5h4" stroke="#c0c0c0" stroke-width="1" fill="none"/>
<text x="21.7" y="447" fill="#c0c0c0" class="cj">波段短线之短</text>
<text x="98.7" y="447" fill="#ffffff" class="cj">短线出击</text>
<text x="147.5" y="446.5" fill="#ffffff" >: -</text>
<text x="1052.5" y="52" fill="#ff3232" textLength="29.5">32.00</text>
<text x="1052.5" y="79" fill="#ff3232" textLength="29.5">31.50</text>
<text x="1052.5" y="103" fill="#ff3232" textLength="29.5">31.00</text>
<text x="1052.5" y="130" fill="#ff3232" textLength="29.5">30.50</text>
<text x="1052.5" y="154" fill="#ff3232" textLength="29.5">30.00</text>
<text x="1052.5" y="180" fill="#ff3232" textLength="29.5">29.50</text>
<text x="1052.5" y="206" fill="#ff3232" textLength="29.5">29.00</text>
<text x="1052.5" y="233" fill="#ff3232" textLength="29.5">28.50</text>
<text x="1052.5" y="257" fill="#ff3232" textLength="29.5">28.00</text>
<text x="1052.5" y="284" fill="#ff3232" textLength="29.5">27.50</text>
<text x="1052.5" y="308" fill="#ff3232" textLength="29.5">27.00</text>
<text x="1052.5" y="335" fill="#ff3232" textLength="29.5">26.50</text>
<text x="1052.5" y="359" fill="#ff3232" textLength="29.5">26.00</text>
<text x="1052.5" y="386" fill="#ff3232" textLength="29.5">25.50</text>
<text x="1052.5" y="410" fill="#ff3232" textLength="29.5">25.00</text>
<text x="1053" y="476" fill="#ff3232" textLength="29">220.0</text>
<text x="1053" y="517" fill="#ff3232" textLength="29">200.0</text>
<text x="1053" y="557" fill="#ff3232" textLength="29">180.0</text>
<text x="1053" y="598" fill="#ff3232" textLength="29">160.0</text>
<text x="1053" y="638" fill="#ff3232" textLength="29">140.0</text>
<text x="1053" y="678" fill="#ff3232" textLength="29">120.0</text>
<text x="1039.5" y="454" fill="#c0c0c0" textLength="36">226.65</text>
<path d="M953.7,420.6l3.2,3.2h-6.4z" fill="#ff0000"/>
<text x="950.4" y="432" fill="#ff0000" style="font-weight:bold;font-size:9.8px">S</text>
<rect x="979" y="419" width="13" height="13" fill="#003878"/>
<text x="979.5" y="430.5" fill="#ffffff" class="cj">财</text>
<clipPath id="cb"><rect x="531" y="718" width="77" height="3"/></clipPath>
<text x="533" y="728" fill="#ffffff" clip-path="url(#cb)" class="cj">2013/05/07/二</text>
<text x="933" y="720.5" fill="#ff0000" style="font-size:24px">www.cfchi.com</text>
</svg></body></html>
